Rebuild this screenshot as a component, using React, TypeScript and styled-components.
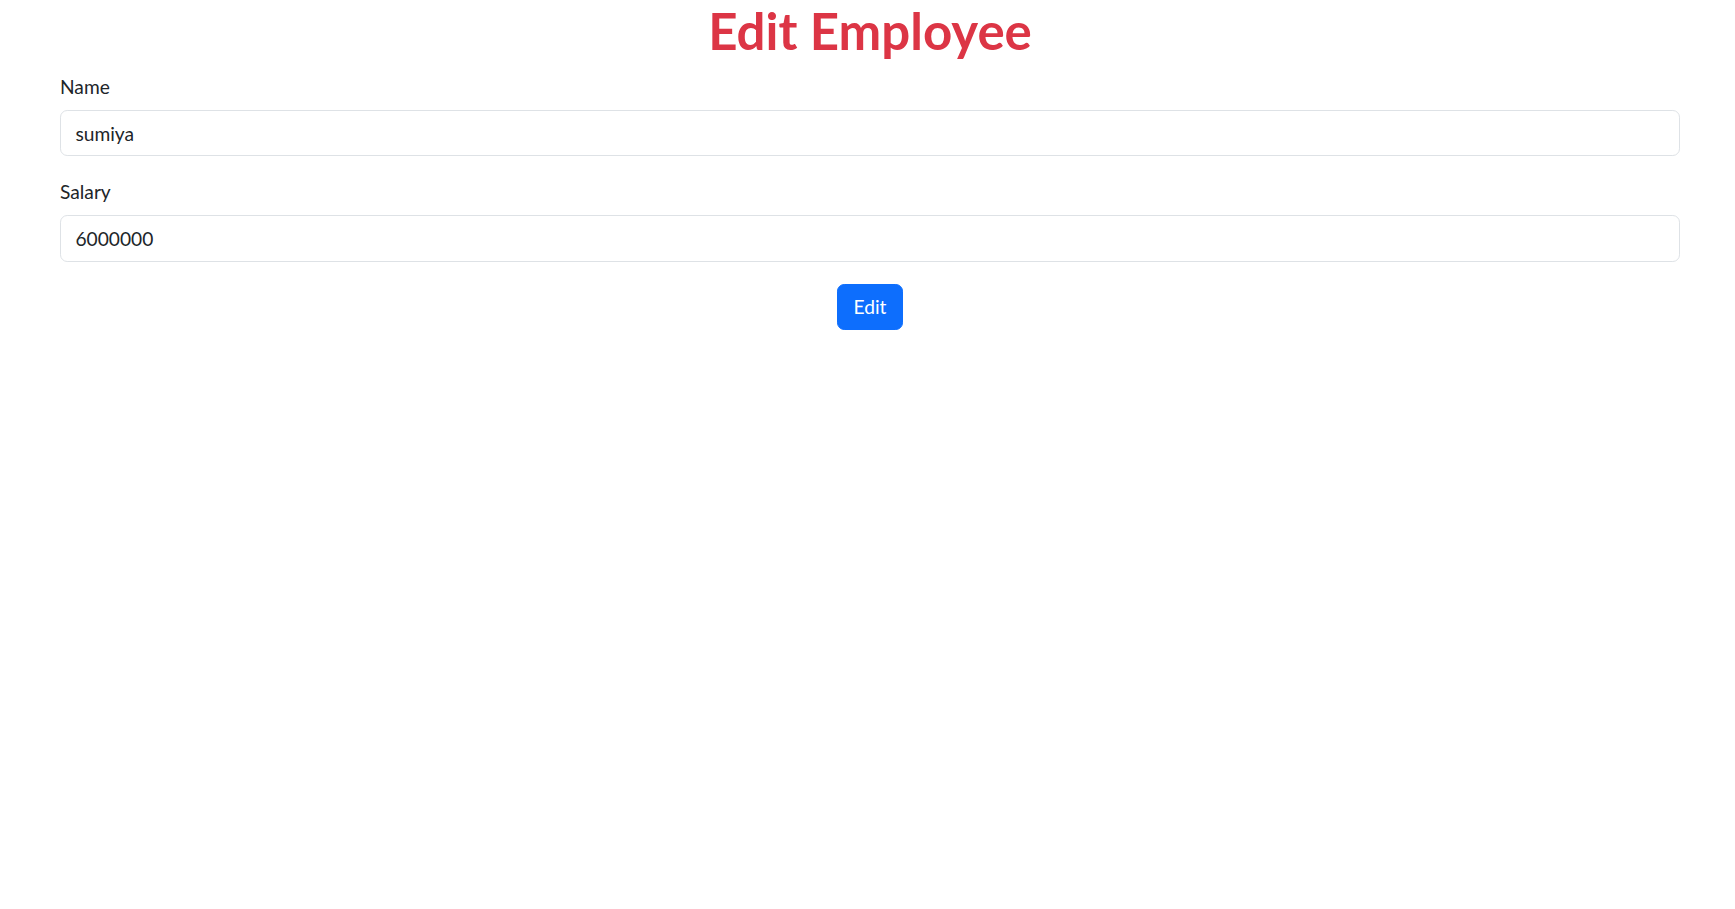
import React from "react";
import styled, { createGlobalStyle } from "styled-components";

const GlobalStyle = createGlobalStyle`
  html, body {
    margin: 0;
    padding: 0;
    background: #ffffff;
  }
  body {
    font-family: Lato, "Open Sans", sans-serif;
    font-size: 19.2px;
    line-height: 1.5;
    color: #212529;
  }
  * { box-sizing: border-box; }
`;

const Page = styled.div`
  padding: 0 55px 0 60px;
`;

const Title = styled.h1`
  margin: 0 0 12px;
  text-align: center;
  font-size: 51px;
  font-weight: 700;
  line-height: 1.2;
  color: #dc3545;
`;

const Form = styled.form`
  display: flex;
  flex-direction: column;
`;

const Field = styled.div`
  display: flex;
  flex-direction: column;
  margin-bottom: 22px;
`;

const Label = styled.label`
  display: block;
  margin-bottom: 8px;
  font-size: 19.2px;
  line-height: 28.8px;
`;

const Input = styled.input`
  display: block;
  width: 100%;
  height: 46.4px;
  padding: 7.2px 14.4px;
  font-family: inherit;
  font-size: 19.2px;
  line-height: 1.5;
  color: #212529;
  background: #fff;
  border: 1.2px solid #dee2e6;
  border-radius: 7.2px;
  outline: none;
`;

const Actions = styled.div`
  display: flex;
  justify-content: center;
`;

const Button = styled.button`
  height: 46.4px;
  padding: 0 15.6px;
  font-family: inherit;
  font-size: 19.2px;
  color: #fff;
  background: #0d6efd;
  border: 1.2px solid #0d6efd;
  border-radius: 7.2px;
  cursor: pointer;
`;

export default function App() {
  return (
    <>
      <GlobalStyle />
      <Page>
        <Title>Edit Employee</Title>
        <Form onSubmit={(e) => e.preventDefault()}>
          <Field>
            <Label htmlFor="name">Name</Label>
            <Input id="name" defaultValue="sumiya" />
          </Field>
          <Field>
            <Label htmlFor="salary">Salary</Label>
            <Input id="salary" defaultValue="6000000" />
          </Field>
          <Actions>
            <Button type="submit">Edit</Button>
          </Actions>
        </Form>
      </Page>
    </>
  );
}
